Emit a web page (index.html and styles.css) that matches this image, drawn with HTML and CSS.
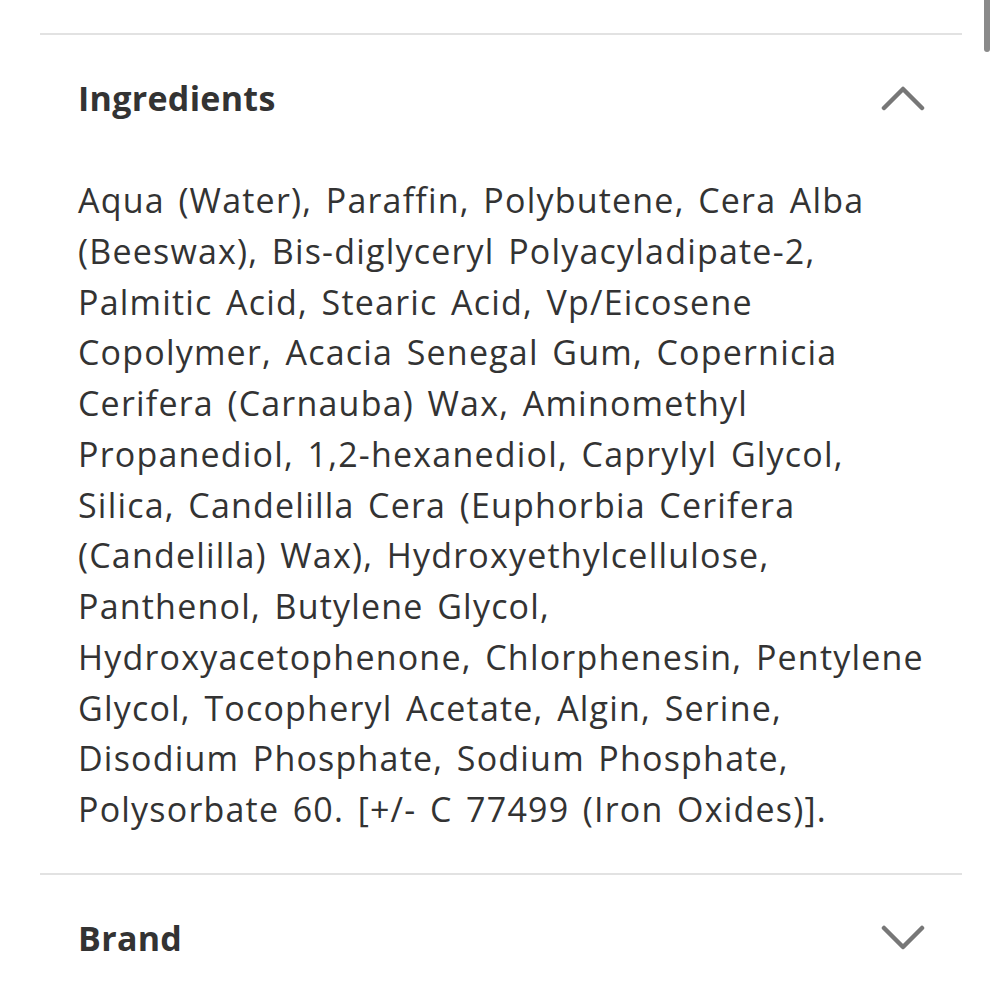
FILE: index.html
```html
<!DOCTYPE html>
<html>
<head>
<meta charset="utf-8">
<link rel="stylesheet" href="styles.css">
</head>
<body>
<div class="scroll-indicator"></div>
<div class="page">
  <section class="acc">
    <div class="acc-head">
      <h2 class="acc-title">Ingredients</h2>
      <svg class="chev" width="44" height="26" viewBox="0 0 44 26"><polyline points="3,23 22,4 41,23" fill="none" stroke="#777" stroke-width="4.5" stroke-linecap="round" stroke-linejoin="round"/></svg>
    </div>
    <p class="acc-body">Aqua (Water), Paraffin, Polybutene, Cera Alba<br>(Beeswax), Bis-diglyceryl Polyacyladipate-2,<br>Palmitic Acid, Stearic Acid, Vp/Eicosene<br>Copolymer, Acacia Senegal Gum, Copernicia<br>Cerifera (Carnauba) Wax, Aminomethyl<br>Propanediol, 1,2-hexanediol, Caprylyl Glycol,<br>Silica, Candelilla Cera (Euphorbia Cerifera<br>(Candelilla) Wax), Hydroxyethylcellulose,<br>Panthenol, Butylene Glycol,<br>Hydroxyacetophenone, Chlorphenesin, Pentylene<br>Glycol, Tocopheryl Acetate, Algin, Serine,<br>Disodium Phosphate, Sodium Phosphate,<br>Polysorbate 60. [+/- C 77499 (Iron Oxides)].</p>
  </section>
  <section class="acc">
    <div class="acc-head">
      <h2 class="acc-title">Brand</h2>
      <svg class="chev" width="44" height="26" viewBox="0 0 44 26"><polyline points="3,3 22,22 41,3" fill="none" stroke="#777" stroke-width="4.5" stroke-linecap="round" stroke-linejoin="round"/></svg>
    </div>
  </section>
</div>
</body>
</html>
```
FILE: styles.css
```css
html, body {
  margin: 0;
  padding: 0;
  background: #fff;
}
body {
  font-family: "Open Sans", Lato, sans-serif;
  color: #333;
  overflow: hidden;
}
.page {
  padding: 33px 38px 0 40px;
}
.acc {
  border-top: 2px solid #e2e2e2;
}
.acc-head {
  height: 126px;
  display: flex;
  align-items: center;
  justify-content: space-between;
  padding: 0 37px 0 38px;
}
.acc-title {
  margin: 0;
  font-size: 34px;
  font-weight: 700;
  letter-spacing: 0.3px;
  color: #333;
  line-height: 1;
}
.chev {
  display: block;
}
.acc-body {
  margin: 14px 0 0;
  padding: 0 0 38px 38px;
  font-size: 34px;
  line-height: 50.75px;
  font-weight: 400;
  letter-spacing: 1.2px;
  word-spacing: 3.5px;
  white-space: nowrap;
  color: #333;
}
.scroll-indicator {
  position: fixed;
  top: -6px;
  right: 10px;
  width: 6px;
  height: 58px;
  border-radius: 3px;
  background: #8a8a8a;
}
```
